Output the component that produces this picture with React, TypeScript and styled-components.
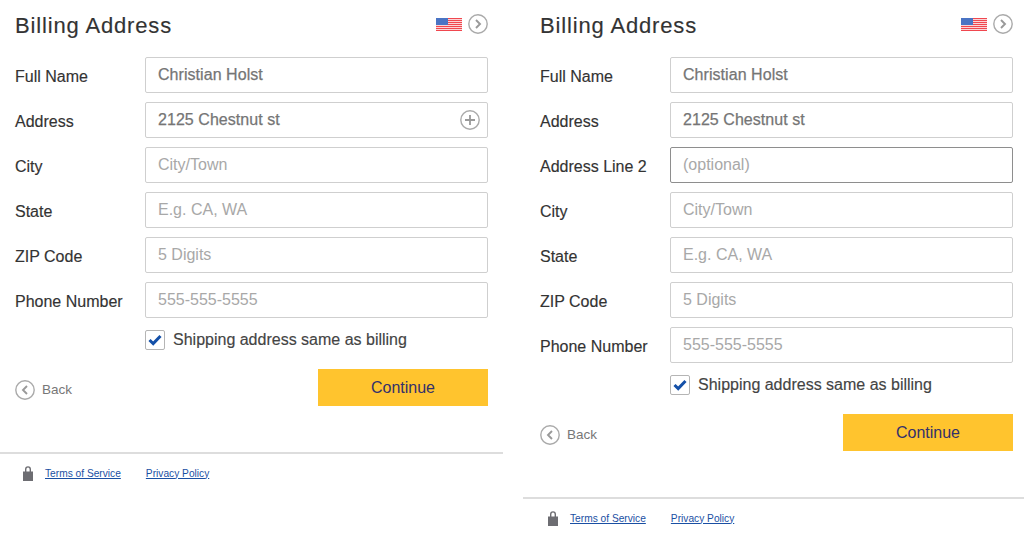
import React from "react";
import styled, { createGlobalStyle } from "styled-components";

const Global = createGlobalStyle`
  html, body { margin: 0; padding: 0; background: #fff; }
  body { font-family: "Liberation Sans", Arial, sans-serif; width: 1024px; height: 533px; overflow: hidden; }
`;
const Page = styled.div`
  display: flex;
  justify-content: space-between;
  width: 1024px;
  align-items: flex-start;
`;
const Panel = styled.section<{ $width: number }>`
  width: ${(p) => p.$width}px;
  display: flex;
  flex-direction: column;
`;
const Body = styled.div<{ $left: number; $right: number }>`
  padding: 0 ${(p) => p.$right}px 0 ${(p) => p.$left}px;
  display: flex;
  flex-direction: column;
`;
const Header = styled.header`
  height: 57px;
  display: flex;
  align-items: flex-start;
  justify-content: space-between;
`;
const Title = styled.h1`
  margin: 12px 0 0;
  font-size: 22px;
  line-height: 28px;
  font-weight: 400;
  letter-spacing: 0.85px;
  color: #333;
  -webkit-text-stroke: 0.15px #333;
`;
const HeaderIcons = styled.div`
  display: flex;
  align-items: center;
  gap: 6px;
  margin-top: 14px;
`;
const Row = styled.div`
  display: flex;
  align-items: center;
  height: 36px;
  margin-bottom: 9px;
`;
const Label = styled.label`
  width: 130px;
  font-size: 16px;
  color: #333;
  padding-top: 3px;
  -webkit-text-stroke: 0.15px #333;
`;
const Field = styled.div<{ $focus?: boolean }>`
  position: relative;
  flex: 1;
  height: 36px;
  box-sizing: border-box;
  border: 1px solid ${(p) => (p.$focus ? "#8e8e8e" : "#cfcfcf")};
  border-radius: 2px;
  display: flex;
  align-items: center;
  padding: 0 0 0 12px;
  font-size: 16px;
  color: #a8a8a8;
`;
const Value = styled.span`
  color: #757575;
  letter-spacing: 0.05px;
  -webkit-text-stroke: 0.25px #757575;
`;
const PlusButton = styled.span`
  position: absolute;
  right: 7px;
  top: 7px;
  display: flex;
`;
const CheckRow = styled.div`
  display: flex;
  align-items: center;
  gap: 8px;
  margin: 1px 0 0 130px;
  height: 24px;
  font-size: 16px;
  color: #444;
  -webkit-text-stroke: 0.15px #444;
`;
const CheckBox = styled.span`
  width: 20px;
  height: 20px;
  box-sizing: border-box;
  border: 1px solid #b5b5b5;
  border-radius: 2px;
  display: flex;
  align-items: center;
  justify-content: center;
`;
const Actions = styled.div`
  display: flex;
  align-items: center;
  justify-content: space-between;
  margin-top: 17px;
  height: 37px;
`;
const Back = styled.div`
  display: flex;
  align-items: center;
  gap: 7px;
  font-size: 13.5px;
  color: #777;
  padding-top: 4px;
`;
const Continue = styled.button`
  width: 170px;
  height: 37px;
  background: #ffc42e;
  border: 0;
  padding: 0;
  font: 16px "Liberation Sans", Arial, sans-serif;
  color: #33306b;
`;
const Footer = styled.footer<{ $inset: number }>`
  margin-top: 46px;
  border-top: 2px solid #ddd;
  height: 40px;
  display: flex;
  align-items: center;
  padding: 0 0 0 ${(p) => p.$inset}px;
  box-sizing: border-box;
  font-size: 10.2px;
`;
const FootLink = styled.a`
  color: #1a4fa3;
  text-decoration: underline;
  margin-left: 12px;
  margin-right: 13px;
`;

const stripes = [0, 2, 4, 6, 8, 10, 12];
const Flag = () => (
  <svg width="26" height="15" viewBox="0 0 26 13">
    <rect width="26" height="13" fill="#fbd4d6" />
    {stripes.map((y) => (
      <rect key={y} y={y} width="26" height="1" fill="#f0474f" />
    ))}
    <rect width="12" height="7" fill="#4a74c4" />
  </svg>
);
const Chevron = ({ left }: { left?: boolean }) => (
  <svg width="20" height="20" viewBox="0 0 20 20" fill="none">
    <circle cx="10" cy="10" r="9.2" stroke="#aaa" strokeWidth="1.4" />
    <path
      d={left ? "M12 6 L8 10 L12 14" : "M8 6 L12 10 L8 14"}
      stroke="#999"
      strokeWidth="1.9"
    />
  </svg>
);
const Plus = () => (
  <svg width="20" height="20" viewBox="0 0 20 20" fill="none">
    <circle cx="10" cy="10" r="9.2" stroke="#aaa" strokeWidth="1.4" />
    <path d="M10 5V15M5 10H15" stroke="#999" strokeWidth="1.8" />
  </svg>
);
const Lock = () => (
  <svg width="10" height="15" viewBox="0 0 10 15">
    <path d="M2.7 6V3.2a2.3 2.3 0 0 1 4.6 0V6" fill="none" stroke="#6d6d72" strokeWidth="1.4" />
    <rect y="5.5" width="10" height="9.5" fill="#6d6d72" />
  </svg>
);
const Tick = () => (
  <svg width="14" height="12" viewBox="0 0 14 12">
    <path d="M1.5 6 L5.2 9.6 L12.5 2" fill="none" stroke="#1450a8" strokeWidth="3" />
  </svg>
);

type F = { label: string; value?: string; hint?: string; plus?: boolean; focus?: boolean };
const left: F[] = [
  { label: "Full Name", value: "Christian Holst" },
  { label: "Address", value: "2125 Chestnut st", plus: true },
  { label: "City", hint: "City/Town" },
  { label: "State", hint: "E.g. CA, WA" },
  { label: "ZIP Code", hint: "5 Digits" },
  { label: "Phone Number", hint: "555-555-5555" },
];
const right: F[] = [
  { label: "Full Name", value: "Christian Holst" },
  { label: "Address", value: "2125 Chestnut st" },
  { label: "Address Line 2", hint: "(optional)", focus: true },
  { label: "City", hint: "City/Town" },
  { label: "State", hint: "E.g. CA, WA" },
  { label: "ZIP Code", hint: "5 Digits" },
  { label: "Phone Number", hint: "555-555-5555" },
];

type FormProps = { fields: F[]; width: number; insetLeft: number; insetRight: number; footerInset: number };
const Form = ({ fields, width, insetLeft, insetRight, footerInset }: FormProps) => (
  <Panel $width={width}>
    <Body $left={insetLeft} $right={insetRight}>
      <Header>
        <Title>Billing Address</Title>
        <HeaderIcons>
          <Flag />
          <Chevron />
        </HeaderIcons>
      </Header>
      {fields.map((f) => (
        <Row key={f.label}>
          <Label>{f.label}</Label>
          <Field $focus={f.focus}>
            {f.value ? <Value>{f.value}</Value> : f.hint}
            {f.plus && (
              <PlusButton>
                <Plus />
              </PlusButton>
            )}
          </Field>
        </Row>
      ))}
      <CheckRow>
        <CheckBox>
          <Tick />
        </CheckBox>
        Shipping address same as billing
      </CheckRow>
      <Actions>
        <Back>
          <Chevron left />
          Back
        </Back>
        <Continue>Continue</Continue>
      </Actions>
    </Body>
    <Footer $inset={footerInset}>
      <Lock />
      <FootLink href="#">Terms of Service</FootLink>
      <FootLink href="#">Privacy Policy</FootLink>
    </Footer>
  </Panel>
);

export default function App() {
  return (
    <Page>
      <Global />
      <Form fields={left} width={503} insetLeft={15} insetRight={15} footerInset={23} />
      <Form fields={right} width={501} insetLeft={17} insetRight={11} footerInset={25} />
    </Page>
  );
}
